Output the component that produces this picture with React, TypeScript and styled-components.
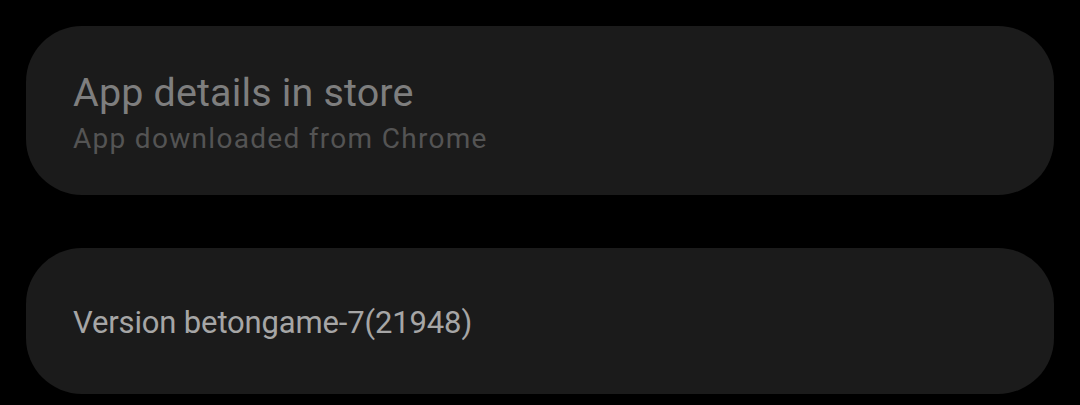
import React from "react";
import styled, { createGlobalStyle } from "styled-components";

const GlobalStyle = createGlobalStyle`
  html, body {
    margin: 0;
    padding: 0;
    background: #000;
  }
  body {
    font-family: Roboto, "Noto Sans", sans-serif;
    -webkit-font-smoothing: antialiased;
  }
`;

const Page = styled.div`
  display: flex;
  flex-direction: column;
  gap: 53px;
  padding: 26px 26px 0 26px;
  background: #000;
  min-height: 405px;
  box-sizing: border-box;
`;

const Card = styled.div<{ $height: number; $padTop: number }>`
  box-sizing: border-box;
  height: ${(p) => p.$height}px;
  padding: ${(p) => p.$padTop}px 47px 0 47px;
  background: #1b1b1b;
  border-radius: 56px;
  display: flex;
  flex-direction: column;
`;

const Title = styled.div`
  font-size: 39.5px;
  line-height: 44px;
  letter-spacing: 0.15px;
  color: #7e7e7e;
  white-space: nowrap;
`;

const Subtitle = styled.div`
  margin-top: 7px;
  font-size: 28px;
  line-height: 34px;
  letter-spacing: 1.3px;
  color: #545454;
  white-space: nowrap;
`;

const Value = styled.div`
  font-size: 31px;
  line-height: 40px;
  letter-spacing: -0.15px;
  color: #a6a6a6;
  white-space: nowrap;
`;

export default function App() {
  return (
    <>
      <GlobalStyle />
      <Page>
        <Card $height={169} $padTop={45}>
          <Title>App details in store</Title>
          <Subtitle>App downloaded from Chrome</Subtitle>
        </Card>
        <Card $height={146} $padTop={55}>
          <Value>Version betongame-7(21948)</Value>
        </Card>
      </Page>
    </>
  );
}
